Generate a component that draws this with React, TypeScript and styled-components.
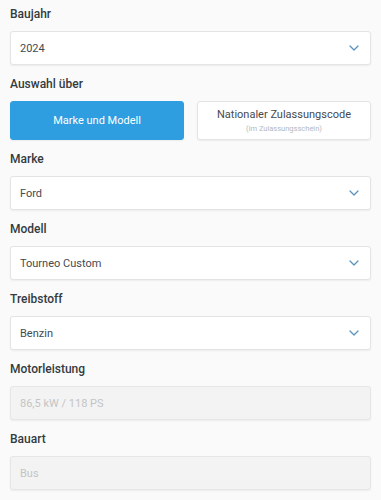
import React, { useState } from "react";
import styled, { createGlobalStyle } from "styled-components";

const GlobalStyle = createGlobalStyle`
  html, body {
    margin: 0;
    padding: 0;
    background: #fafafa;
    font-family: Roboto, "Liberation Sans", Arial, sans-serif;
  }
`;

const Page = styled.div`
  padding: 6px 10px 0;
`;

const Field = styled.div`
  margin-bottom: 11px;
`;

const Label = styled.div`
  font-size: 12px;
  line-height: 16px;
  font-weight: 500;
  color: #333a40;
  margin-bottom: 9px;
`;

const SelectBox = styled.div<{ $disabled?: boolean }>`
  box-sizing: border-box;
  height: 34px;
  display: flex;
  align-items: center;
  justify-content: space-between;
  padding: 0 10px 0 9px;
  border: 1px solid ${(p) => (p.$disabled ? "#e6e6e6" : "#e2e4e6")};
  border-radius: 3px;
  background: ${(p) => (p.$disabled ? "#f3f3f3" : "#ffffff")};
  box-shadow: 0 1px 2px rgba(0, 0, 0, 0.06);
  font-size: 11px;
  color: ${(p) => (p.$disabled ? "#c4c4c4" : "#454a4f")};
`;

const Chevron = styled.svg`
  width: 10px;
  height: 6px;
  margin-right: 1px;
  flex: none;
`;

const ToggleRow = styled.div`
  display: grid;
  grid-template-columns: 1fr 1fr;
  gap: 13px;
`;

const ToggleButton = styled.button<{ $active?: boolean }>`
  box-sizing: border-box;
  height: 39px;
  display: flex;
  flex-direction: column;
  align-items: center;
  justify-content: center;
  border-radius: 3px;
  border: 1px solid ${(p) => (p.$active ? "#2f9ee0" : "#e2e4e6")};
  background: ${(p) => (p.$active ? "#2f9ee0" : "#ffffff")};
  color: ${(p) => (p.$active ? "#ffffff" : "#454a4f")};
  box-shadow: 0 1px 2px rgba(0, 0, 0, 0.06);
  font-family: inherit;
  font-size: 11px;
  line-height: 14px;
  padding: 0;
  cursor: pointer;
`;

const SubText = styled.span`
  font-size: 7.5px;
  line-height: 10px;
  color: #b4b8bc;
  margin-top: 2px;
`;

const ChevronIcon = () => (
  <Chevron viewBox="0 0 10 6">
    <path d="M1 1l4 4 4-4" fill="none" stroke="#5b93c0" strokeWidth="1.3" strokeLinecap="round" strokeLinejoin="round" />
  </Chevron>
);

const selects = [
  { label: "Marke", value: "Ford" },
  { label: "Modell", value: "Tourneo Custom" },
  { label: "Treibstoff", value: "Benzin" },
];

const App: React.FC = () => {
  const [mode, setMode] = useState<"modell" | "code">("modell");

  return (
    <>
      <GlobalStyle />
      <Page>
        <Field>
          <Label>Baujahr</Label>
          <SelectBox>
            <span>2024</span>
            <ChevronIcon />
          </SelectBox>
        </Field>

        <Field>
          <Label>Auswahl über</Label>
          <ToggleRow>
            <ToggleButton $active={mode === "modell"} onClick={() => setMode("modell")}>
              Marke und Modell
            </ToggleButton>
            <ToggleButton $active={mode === "code"} onClick={() => setMode("code")}>
              Nationaler Zulassungscode
              <SubText>(im Zulassungsschein)</SubText>
            </ToggleButton>
          </ToggleRow>
        </Field>

        {selects.map((s) => (
          <Field key={s.label}>
            <Label>{s.label}</Label>
            <SelectBox>
              <span>{s.value}</span>
              <ChevronIcon />
            </SelectBox>
          </Field>
        ))}

        <Field>
          <Label>Motorleistung</Label>
          <SelectBox $disabled>86,5 kW / 118 PS</SelectBox>
        </Field>

        <Field>
          <Label>Bauart</Label>
          <SelectBox $disabled>Bus</SelectBox>
        </Field>
      </Page>
    </>
  );
};

export default App;
